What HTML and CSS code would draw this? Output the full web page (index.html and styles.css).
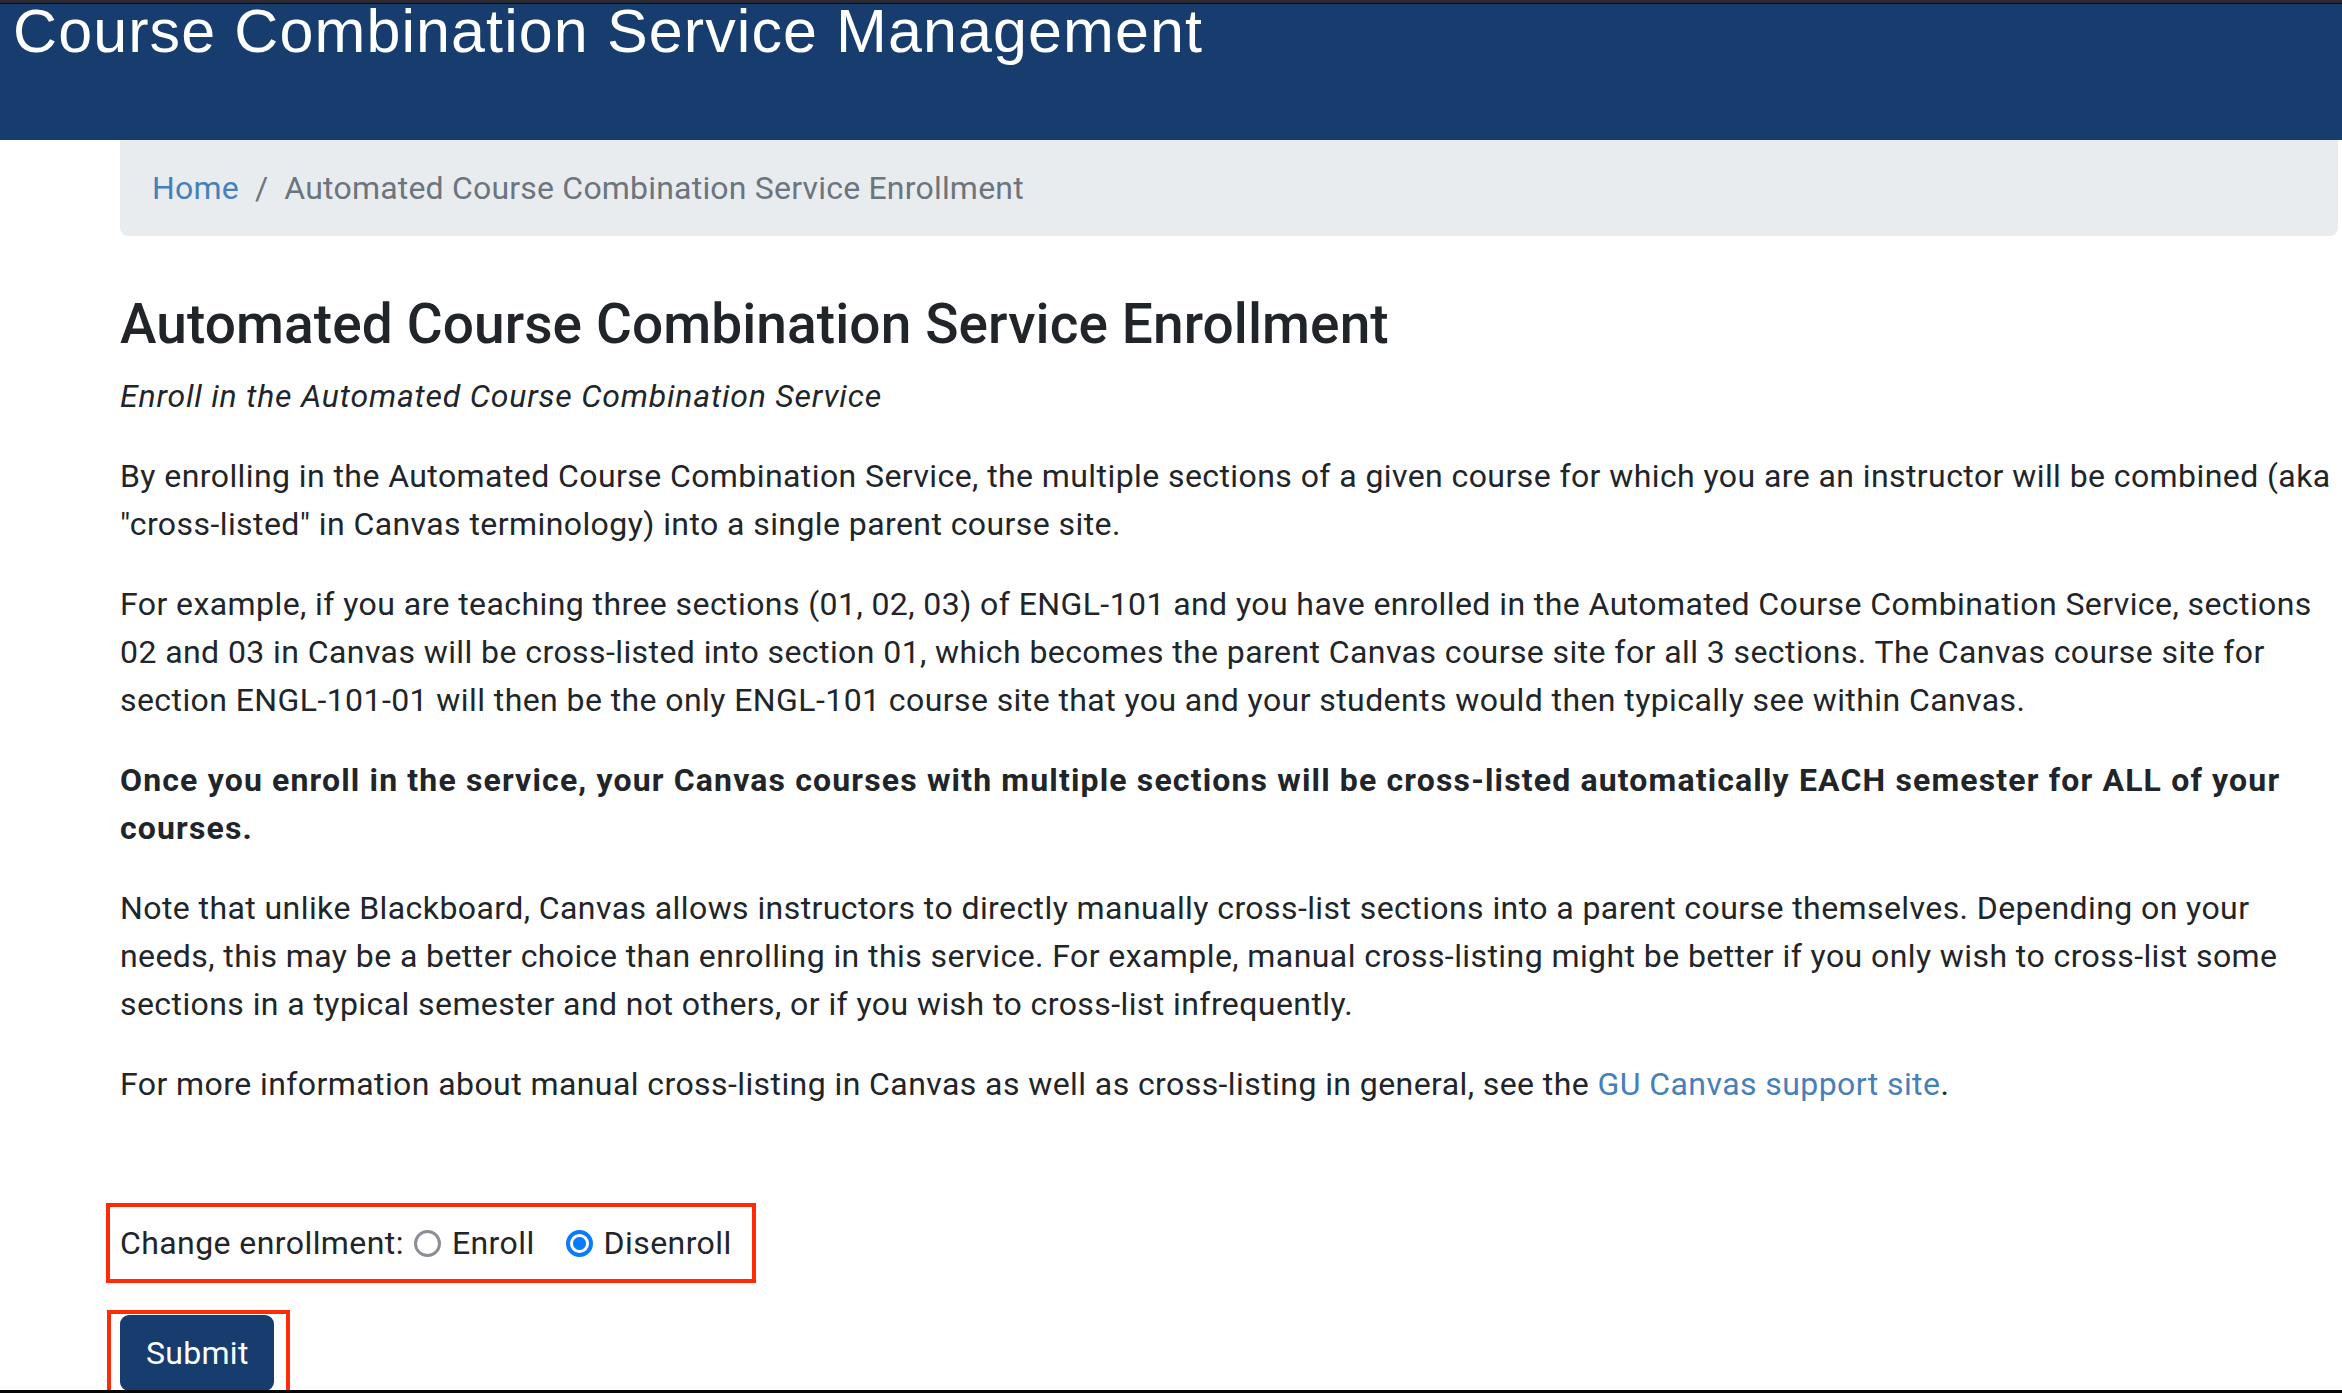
FILE: index.html
```html
<!DOCTYPE html>
<html lang="en">
<head>
<meta charset="utf-8">
<title>Course Combination Service Management</title>
<link rel="stylesheet" href="styles.css">
</head>
<body>
<header class="site-header">
  <h1 class="site-title">Course Combination Service Management</h1>
</header>
<main class="page">
  <nav class="breadcrumb">
    <a class="crumb-link" href="#">Home</a>
    <span class="crumb-sep">/</span>
    <span class="crumb-current">Automated Course Combination Service Enrollment</span>
  </nav>

  <h3 class="page-title">Automated Course Combination Service Enrollment</h3>
  <p class="subtitle">Enroll in the Automated Course Combination Service</p>

  <p class="copy">By enrolling in the Automated Course Combination Service, the multiple sections of a given course for which you are an instructor will be combined (aka<br>"cross-listed" in Canvas terminology) into a single parent course site.</p>

  <p class="copy">For example, if you are teaching three sections (01, 02, 03) of ENGL-101 and you have enrolled in the Automated Course Combination Service, sections<br>02 and 03 in Canvas will be cross-listed into section 01, which becomes the parent Canvas course site for all 3 sections. The Canvas course site for<br>section ENGL-101-01 will then be the only ENGL-101 course site that you and your students would then typically see within Canvas.</p>

  <p class="copy strong">Once you enroll in the service, your Canvas courses with multiple sections will be cross-listed automatically EACH semester for ALL of your<br>courses.</p>

  <p class="copy">Note that unlike Blackboard, Canvas allows instructors to directly manually cross-list sections into a parent course themselves. Depending on your<br>needs, this may be a better choice than enrolling in this service. For example, manual cross-listing might be better if you only wish to cross-list some<br>sections in a typical semester and not others, or if you wish to cross-list infrequently.</p>

  <p class="copy">For more information about manual cross-listing in Canvas as well as cross-listing in general, see the <a class="link" href="#">GU Canvas support site</a>.</p>

  <form class="enroll-form">
    <div class="annot annot-row">
      <span class="field-label">Change enrollment:</span>
      <label class="radio"><span class="radio-dot"></span>Enroll</label>
      <label class="radio"><span class="radio-dot checked"></span>Disenroll</label>
    </div>
    <div class="annot annot-btn">
      <button class="btn-submit" type="button">Submit</button>
    </div>
  </form>
</main>
<div class="screen-edge"></div>
</body>
</html>
```
FILE: styles.css
```css
html, body {
  margin: 0;
  padding: 0;
  background: #ffffff;
  overflow: hidden;
}
body {
  font-family: "Roboto", "Liberation Sans", sans-serif;
  font-size: 32px;
  line-height: 48px;
  color: #212529;
  letter-spacing: 0.42px;
}

/* header */
.site-header {
  background: #163d6e;
  border-top: 3px solid #2b2931;
  box-shadow: inset 0 1px 0 #0c0c10;
  height: 137px;
}
.site-title {
  margin: 0;
  padding-left: 13px;
  font-family: "Liberation Sans", Arial, sans-serif;
  font-weight: 400;
  font-size: 61px;
  line-height: 61px;
  letter-spacing: 1.1px;
  color: #ffffff;
  position: relative;
  top: -2px;
}

/* page */
.page {
  margin-left: 120px;
  width: 2218px;
}

.breadcrumb {
  display: flex;
  align-items: center;
  background: #e9ecef;
  border-radius: 0 0 8px 8px;
  padding: 24px 32px;
  margin-bottom: 55px;
  color: #6c757d;
  letter-spacing: 0.2px;
}
.crumb-link {
  color: #4680b9;
  text-decoration: none;
}
.crumb-sep {
  padding: 0 16px;
  color: #6c757d;
}
.crumb-current { color: #6c757d; }

.page-title {
  margin: 0 0 15px;
  font-size: 55px;
  line-height: 66px;
  font-weight: 500;
  letter-spacing: 0.1px;
  color: #212529;
}

.subtitle {
  margin: 0 0 32px;
  font-style: italic;
  letter-spacing: 0.8px;
}

.copy {
  margin: 0 0 32px;
  white-space: nowrap;
}
.copy.strong { font-weight: 700; letter-spacing: 1.15px; }

.link {
  color: #4680b9;
  text-decoration: none;
}

/* form */
.enroll-form {
  margin-top: 95px;
}
.annot {
  border: 4px solid #ff2b06;
  box-sizing: border-box;
}
.annot-row {
  display: inline-flex;
  align-items: center;
  margin-left: -14px;
  padding: 12px 20px 12px 10px;
  margin-bottom: 27px;
}
.field-label {
  margin-right: 10px;
}
.radio {
  display: inline-flex;
  align-items: center;
  gap: 11px;
  margin-right: 31px;
}
.radio:last-child { margin-right: 0; }
.radio-dot {
  width: 27px;
  height: 27px;
  box-sizing: border-box;
  border-radius: 50%;
  border: 3px solid #8e8d95;
  background: #ffffff;
  display: inline-block;
}
.radio-dot.checked {
  border: 4px solid #0a7bff;
  background: radial-gradient(circle, #0a7bff 0 6px, #ffffff 7px);
}

.annot-btn {
  display: block;
  width: 183px;
  margin-left: -13px;
  padding: 1px 0 0 9px;
}
.btn-submit {
  display: block;
  font-family: "Roboto", "Liberation Sans", sans-serif;
  font-size: 32px;
  line-height: 48px;
  letter-spacing: 0.3px;
  color: #ffffff;
  background: #173d6e;
  border: 2px solid #173d6e;
  border-radius: 9px;
  padding: 12px 24px;
  width: 154px;
  height: 76px;
}

.screen-edge {
  position: fixed;
  left: 0;
  right: 0;
  bottom: 0;
  height: 3px;
  background: #050505;
}
```
